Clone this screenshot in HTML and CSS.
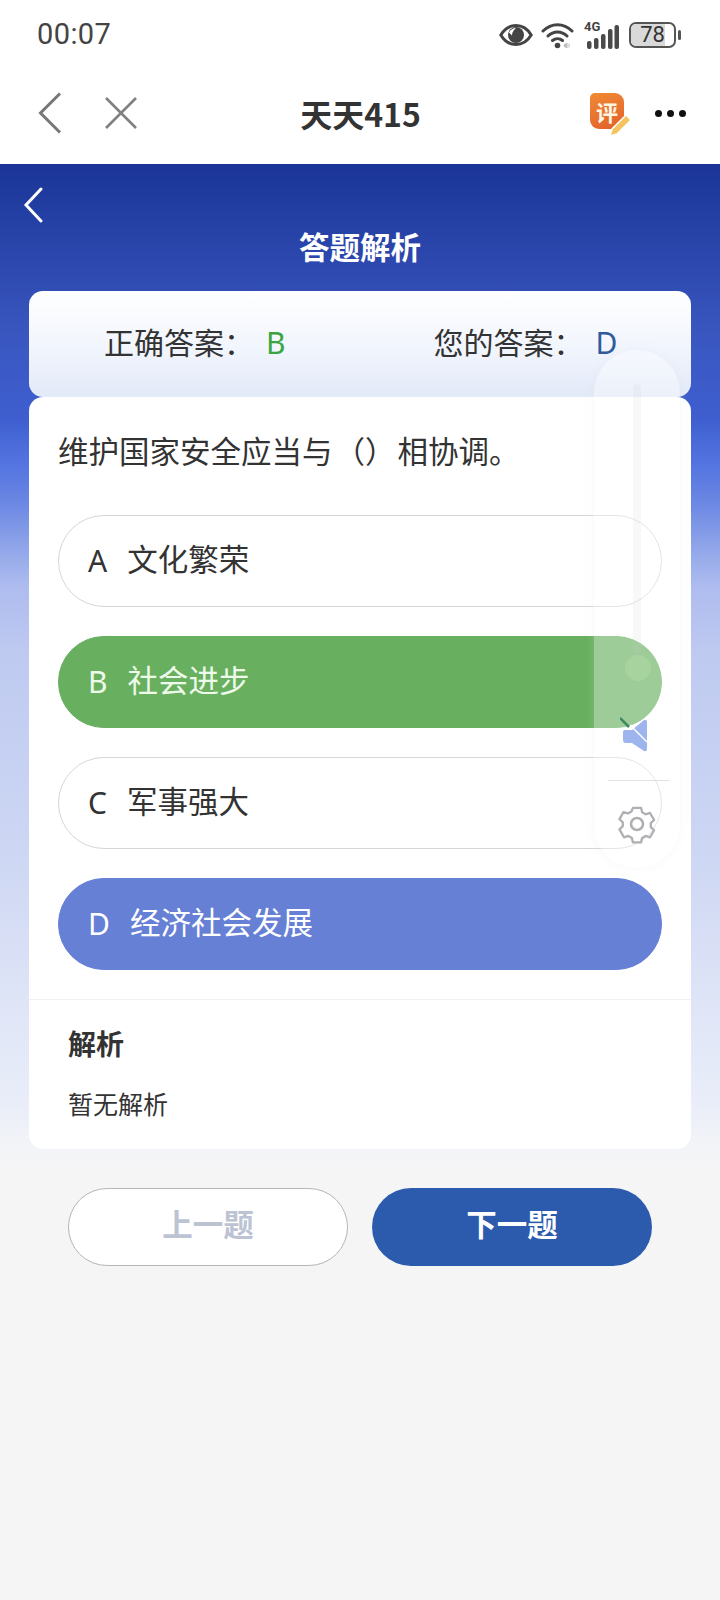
FILE: index.html
```html
<!DOCTYPE html>
<html lang="zh">
<head>
<meta charset="utf-8">
<title>天天415</title>
<link rel="stylesheet" href="styles.css">
</head>
<body>
<div class="phone">
  <div class="status">
    <span class="time">00:07</span>
    <div class="status-icons">
      <svg class="i-eye" width="34" height="24" viewBox="0 0 34 24"><path d="M1.800 12C6 5 11 2.500 17 2.500S28 5 32.200 12C28 19 23 21.500 17 21.500S6 19 1.800 12Z" fill="none" stroke="#444" stroke-width="3"/><circle cx="17" cy="12" r="8" fill="#444"/><path d="M10 9.500C11.500 6.500 14 5 17 5 14.500 7.500 13 9 13 12.500Z" fill="#fff"/></svg>
      <svg class="i-wifi" width="33" height="28" viewBox="0 0 33 28"><path d="M2 10C10.500 1.500 22.500 1.500 31 10M7 15C12.500 9.500 20.500 9.500 26 15M11.500 19.500C14.500 17 18.500 17 21.500 19.500" fill="none" stroke="#444" stroke-width="3" stroke-linecap="round"/><circle cx="16.500" cy="24.500" r="2.800" fill="#444"/><path d="M23 24l3-2v5l-3-2zM28 22.500v4" fill="#bbb" stroke="#bbb"/></svg>
      <div class="signal">
        <span class="net">4G</span>
        <svg width="34" height="25" viewBox="0 0 34 25"><g fill="#4a4a4a"><rect x="1" y="16" width="4.500" height="8" rx="2"/><rect x="8" y="13" width="4.500" height="11" rx="2"/><rect x="15" y="9" width="4.500" height="15" rx="2"/><rect x="22" y="4" width="4.500" height="20" rx="2"/><rect x="28.500" y="0" width="4.500" height="24" rx="2"/></g></svg>
      </div>
      <div class="battery"><div class="battery-body"><span class="battery-level"></span><span class="battery-num">78</span></div><span class="battery-tip"></span></div>
    </div>
  </div>
  <div class="nav">
    <div class="nav-left">
      <svg width="24" height="42" viewBox="0 0 24 42"><path d="M22 1.500 2.500 21 22 40.500" fill="none" stroke="#777" stroke-width="3"/></svg>
      <svg width="34" height="34" viewBox="0 0 34 34"><path d="M2 2 32 32M32 2 2 32" fill="none" stroke="#808080" stroke-width="2.600"/></svg>
    </div>
    <div class="nav-title">天天415</div>
    <div class="nav-right">
      <div class="review">
        <span class="review-box">评</span>
        <svg class="review-pen" width="24" height="24" viewBox="0 0 24 24"><path d="M17 2 22 7 8 21 1 23 3 16Z" fill="#f3c45f" stroke="#fff" stroke-width="1.500"/></svg>
      </div>
      <div class="dots"><i></i><i></i><i></i></div>
    </div>
  </div>
  <main class="page">
    <svg class="page-back" width="20" height="36" viewBox="0 0 20 36"><path d="M18 2 3 18 18 34" fill="none" stroke="#fff" stroke-width="3" stroke-linecap="round"/></svg>
    <h1 class="page-title">答题解析</h1>
    <section class="answers">
      <div class="answer"><span>正确答案：</span><b class="ok">B</b></div>
      <div class="answer"><span>您的答案：</span><b class="mine">D</b></div>
    </section>
    <section class="card">
      <p class="question">维护国家安全应当与<span class="blank">（）</span>相协调。</p>
      <div class="options">
        <div class="option"><span class="letter">A</span><span>文化繁荣</span></div>
        <div class="option right"><span class="letter">B</span><span>社会进步</span></div>
        <div class="option"><span class="letter">C</span><span>军事强大</span></div>
        <div class="option chosen"><span class="letter">D</span><span>经济社会发展</span></div>
      </div>
      <div class="analysis">
        <h2>解析</h2>
        <p>暂无解析</p>
      </div>
    </section>
    <div class="buttons">
      <button class="btn prev">上一题</button>
      <button class="btn next">下一题</button>
    </div>
  </main>
  <aside class="float">
    <div class="track"></div>
    <div class="knob"></div>
    <svg class="mute" width="30" height="40" viewBox="0 0 30 40"><path d="M5 14H12L24 4Q27 3 27 6V33Q27 36 24 35L12 27H6Q3 27 3 24V16Q3 14 5 14Z" fill="#9db4ec"/><path d="M10 9 27 26" stroke="#fff" stroke-width="1.500"/><path d="M0 2 9 11" stroke="#3f8a62" stroke-width="2.500"/></svg>
    <div class="float-line"></div>
    <svg class="gear" width="40" height="40" viewBox="0 0 40 40"><path d="M15.500 2.500h9l1.200 5 3.800 2.200 5-1.500 4.500 7.800-3.700 3.500v4.400l3.700 3.500-4.500 7.800-5-1.500-3.800 2.200-1.200 5h-9l-1.200-5-3.800-2.200-5 1.500L.500 26.400l3.700-3.500v-4.400L.5 15l4.500-7.800 5 1.500 3.800-2.200Z" transform="translate(2 1.600) scale(.9)" fill="none" stroke="#b0b0b4" stroke-width="2.600" stroke-linejoin="round"/><circle cx="20" cy="20" r="6" fill="none" stroke="#b0b0b4" stroke-width="2.600"/></svg>
  </aside>
</div>
</body>
</html>
```
FILE: styles.css
```css
* { box-sizing: border-box; }
html, body { margin: 0; padding: 0; }
body {
  width: 720px;
  height: 1600px;
  background: #f5f5f6;
  font-family: "Noto Sans CJK SC", "Noto Sans", sans-serif;
  color: #333;
  overflow: hidden;
}
.phone { position: relative; width: 720px; height: 1600px; }
.status {
  height: 68px;
  background: #fff;
  display: flex;
  align-items: center;
  justify-content: space-between;
  padding: 1px 39px 0 37px;
}
.time { font: 400 29px/1 Roboto, sans-serif; color: #444; letter-spacing: 0.4px; }
.status-icons { display: flex; align-items: center; gap: 7px; }
.i-eye { margin-right: 1px; }
.i-wifi { margin-right: 3px; }
.signal { position: relative; width: 36px; height: 30px; display: flex; align-items: flex-end; justify-content: flex-end; }
.net { position: absolute; left: 0; top: 0; font: 700 13px/1 Roboto, sans-serif; color: #444; }
.battery { display: flex; align-items: center; gap: 2px; margin-left: 2px; }
.battery-body {
  position: relative;
  width: 47px;
  height: 26px;
  border: 2.500px solid #555;
  border-radius: 7px;
  overflow: hidden;
  display: flex;
  align-items: center;
  justify-content: center;
}
.battery-level { position: absolute; left: 0; top: 0; bottom: 0; width: 78%; background: #d9d9d9; }
.battery-num { position: relative; font: 400 22px/1 Roboto, sans-serif; color: #333; }
.battery-tip { width: 3px; height: 10px; background: #555; border-radius: 2px; }
.nav {
  height: 96px;
  background: #fff;
  display: grid;
  grid-template-columns: 1fr auto 1fr;
  align-items: center;
  padding: 0 34px 6px 38px;
}
.nav-left { display: flex; align-items: center; gap: 42px; }
.nav-title { font-size: 32px; font-weight: 700; line-height: 1; color: #333; margin-left: -3px; }
.nav-right { display: flex; align-items: center; justify-content: flex-end; gap: 25px; }
.review { position: relative; width: 40px; height: 42px; margin-top: 2px; }
.review-box {
  display: flex;
  align-items: center;
  justify-content: center;
  width: 34px;
  height: 36px;
  border-radius: 5px 9px 5px 9px;
  background: linear-gradient(160deg, #f08a34, #e25f2b);
  color: #fff6e5;
  font-size: 22px;
  font-weight: 700;
  line-height: 1;
}
.review-pen { position: absolute; right: -3px; bottom: -2px; }
.dots { display: flex; gap: 5px; }
.dots i { display: block; width: 7px; height: 7px; border-radius: 50%; background: #111; }
.page {
  position: relative;
  height: 1436px;
  padding: 0 29px;
  background: linear-gradient(180deg, #1a3597 0, #3a57c0 171px, #3f5fd0 256px, #5374e0 299px, #6e8ae4 343px, #94a9ea 389px, #aebcef 423px, #bfcaf1 489px, #ced7f3 698px, #dfe5f7 838px, #e9edf9 936px, #f1f3f7 976px, #f5f5f6 1006px);
}
.page-back { position: absolute; left: 23px; top: 23px; }
.page-title {
  margin: 0;
  padding-top: 60px;
  height: 127px;
  text-align: center;
  font-size: 30.500px;
  line-height: 44px;
  font-weight: 700;
  color: #fff;
}
.answers {
  height: 106px;
  display: flex;
  align-items: center;
  padding: 0 0 0 75px;
  gap: 148px;
  border-radius: 14px;
  background: linear-gradient(180deg, #fff 0, #f1f5fd 55%, #e2e9f8 100%);
}
.answer { display: flex; align-items: center; font-size: 30px; line-height: 44px; margin-top: -6px; }
.answer b { font: 400 30px/1 "Noto Sans", sans-serif; margin: 4px 0 0 12px; }
.ok { color: #3aa53f; }
.mine { color: #2f5a9c; }
.card {
  height: 752px;
  background: #fff;
  border-radius: 14px;
  display: flex;
  flex-direction: column;
}
.question { margin: 0; padding: 31px 29px 0; font-size: 30.500px; line-height: 44px; height: 118px; }
.blank { margin: 0 2px; }
.options { display: flex; flex-direction: column; gap: 29px; padding: 0 29px; }
.option {
  height: 92px;
  border: 1px solid #d6d6da;
  border-radius: 46px;
  display: flex;
  align-items: center;
  padding: 0 0 6px 29px;
  font-size: 30.500px;
  color: #333;
}
.letter { margin-right: 20px; padding-top: 4px; font-size: 30px; font-family: "Noto Sans", sans-serif; }
.option.right { background: #68b05f; border-color: #68b05f; color: #eefaea; }
.option.chosen { background: #6680d6; border-color: #6680d6; color: #fff; }
.analysis { margin-top: 29px; border-top: 1px solid #f1f1f3; padding: 22px 39px 0; }
.analysis h2 { margin: 0; font-size: 28px; line-height: 42px; font-weight: 700; color: #333; }
.analysis p { margin: 21px 0 0; font-size: 25px; line-height: 36px; color: #333; }
.buttons { display: flex; justify-content: center; gap: 24px; margin-top: 39px; }
.btn {
  width: 280px;
  height: 78px;
  border-radius: 39px;
  font-family: inherit;
  font-size: 30.500px;
  font-weight: 700;
  padding: 0 0 8px;
}
.prev { background: #fff; border: 1px solid #b5b5ba; color: #bcc3d2; }
.next { background: #2c5bad; border: 0; color: #fff; }
.float {
  position: absolute;
  left: 594px;
  top: 350px;
  width: 86px;
  height: 518px;
  border-radius: 43px;
  background: rgba(255, 255, 255, 0.36);
  box-shadow: 0 0 10px rgba(225, 228, 235, 0.25);
}
.track { position: absolute; left: 39px; top: 34px; width: 8px; height: 270px; background: rgba(200, 200, 205, 0.13); border-radius: 4px; }
.knob { position: absolute; left: 31px; top: 305px; width: 26px; height: 26px; border-radius: 50%; background: rgba(170, 215, 160, 0.75); }
.mute { position: absolute; left: 26px; top: 366px; }
.float-line { position: absolute; left: 14px; top: 430px; width: 62px; height: 1px; background: #e2e2e5; }
.gear { position: absolute; left: 23px; top: 454px; }
```
